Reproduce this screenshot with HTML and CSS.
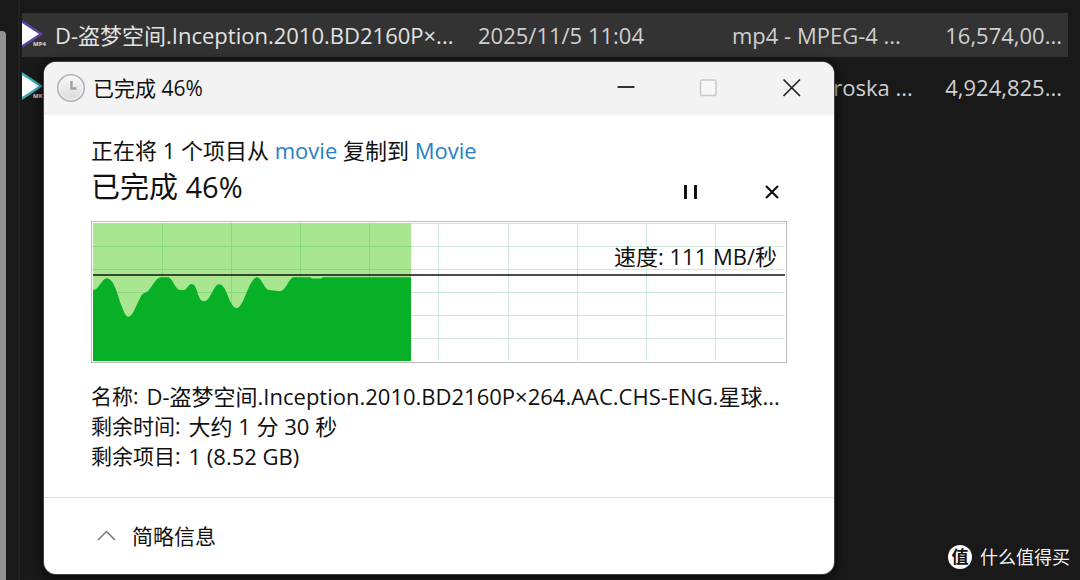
FILE: index.html
```html
<!DOCTYPE html>
<html lang="zh-CN">
<head>
<meta charset="utf-8">
<title>已完成 46%</title>
<link rel="stylesheet" href="styles.css">
</head>
<body>
<main class="desktop">
  <section class="explorer">
    <div class="scrollbar"></div>
    <div class="divider"></div>
    <table class="files">
      <colgroup><col class="col-icon"><col class="col-name"><col class="col-date"><col class="col-type"><col class="col-size"></colgroup>
      <tbody>
        <tr class="file selected">
          <td class="file-icon"><svg width="28" height="44" viewBox="0 0 28 44" aria-hidden="true"><path d="M0 7 21 21 0 35z" fill="#5a45a8"/><path d="M0 10 17 21 0 32z" fill="#fff"/><text x="11" y="33" class="badge">MP4</text></svg></td>
          <td>D-盗梦空间.Inception.2010.BD2160P×...</td>
          <td class="meta">2025/11/5 11:04</td>
          <td class="meta">mp4 - MPEG-4 ...</td>
          <td class="meta size">16,574,00...</td>
        </tr>
        <tr class="file">
          <td class="file-icon"><svg width="28" height="44" viewBox="0 0 28 44" aria-hidden="true"><path d="M0 7 21 21 0 35z" fill="#35aeb8"/><path d="M0 10 17 21 0 32z" fill="#fff"/><text x="11" y="33" class="badge">MKV</text></svg></td>
          <td></td>
          <td></td>
          <td class="meta">mkv - Matroska ...</td>
          <td class="meta size">4,924,825...</td>
        </tr>
      </tbody>
    </table>
  </section>

  <section class="dialog" role="dialog" aria-labelledby="dialog-title">
    <header class="titlebar">
      <svg class="clock" width="30" height="30" viewBox="0 0 30 30" aria-hidden="true">
        <defs><linearGradient id="face" x1="0" y1="0" x2="0" y2="1"><stop offset="0" stop-color="#fafafa"/><stop offset="1" stop-color="#d9d9d9"/></linearGradient></defs>
        <circle cx="15" cy="15" r="13.3" fill="url(#face)" stroke="#b3b3b3" stroke-width="1.6"/>
        <circle cx="15" cy="15" r="11.7" fill="none" stroke="#f8f8f8" stroke-width="1"/>
        <path d="M15.500 8v7.500h5" fill="none" stroke="#a0a0a0" stroke-width="2.4"/>
      </svg>
      <h1 class="title" id="dialog-title">已完成 46%</h1>
      <div class="window-buttons">
        <button class="icon-button" aria-label="最小化"><svg width="20" height="20" viewBox="0 0 20 20"><path d="M1.500 9h17" stroke="#333" stroke-width="2"/></svg></button>
        <button class="icon-button" aria-label="最大化" disabled><svg width="20" height="20" viewBox="0 0 20 20"><rect x="1.500" y="2" width="15.500" height="15.500" rx="1.500" fill="#f7f7f7" stroke="#c8c8c8" stroke-width="1.500"/></svg></button>
        <button class="icon-button" aria-label="关闭"><svg width="20" height="20" viewBox="0 0 20 20"><path d="m1.500 1.500 16.500 16.500M18 1.500l-16.500 16.500" stroke="#222" stroke-width="1.700"/></svg></button>
      </div>
    </header>

    <div class="body">
      <p class="summary">正在将 1 个项目从 <a href="#source">movie</a> 复制到 <a href="#target">Movie</a></p>
      <div class="status">
        <h2 class="progress-title">已完成 46%</h2>
        <div class="actions">
          <button class="icon-button" aria-label="暂停"><svg width="20" height="20" viewBox="0 0 20 20"><path d="M4.500 3v14M14.500 3v14" stroke="#000" stroke-width="2.800"/></svg></button>
          <button class="icon-button" aria-label="取消"><svg width="20" height="20" viewBox="0 0 20 20"><path d="m4 4 12 12M16 4 4 16" stroke="#111" stroke-width="2.200"/></svg></button>
        </div>
      </div>

      <div class="chart">
        <svg class="plot" viewBox="0 0 692 138" preserveAspectRatio="none" aria-hidden="true">
          <path d="M0 .5H692M0 23.500H692M0 46.500H692M0 69.500H692M0 92.500H692M0 115.500H692M69.500 0V138M138.500 0V138M207.500 0V138M276.500 0V138M345.500 0V138M415.500 0V138M484.500 0V138M553.500 0V138M622.500 0V138" stroke="#cfe9d9" fill="none"/>
          <path d="M0 0H318V138H0z" fill="#a8e690"/>
          <path d="M0 23.500H318M0 46.500H318M0 69.500H318M69.500 0V138M138.500 0V138M207.500 0V138M276.500 0V138" stroke="#8ad681" fill="none"/>
          <path d="M0 67C6 67 9 55 14 55.300C20 56 23 66 27 78.700C30 86 32 93.700 35.300 93.700C40 93.700 43 82 48.700 72C50 70 53 70 55.300 67.700C60 63 63 54.300 68 54.300H75C80 55 82 67 87 67H91C94 67 95 61 98.700 61C105 61 104 78.300 111 78.300C118 78.300 120 61.300 126.300 61.300C134 61.300 136 85 143.700 85C151 85 156 54.300 164.300 54.300C168 54.300 172 67 176 67L187 68.300C193 68 196 54.300 201 54.300H217L219 55.500H228L230 54.300H318V138H0z" fill="#08b027"/>
          <path d="M0 52H692" stroke="#111" stroke-width="1.500"/>
        </svg>
        <span class="speed">速度: 111 MB/秒</span>
      </div>

      <dl class="details">
        <div class="detail"><dt>名称:</dt><dd>D-盗梦空间.Inception.2010.BD2160P×264.AAC.CHS-ENG.星球...</dd></div>
        <div class="detail"><dt>剩余时间:</dt><dd>大约 1 分 30 秒</dd></div>
        <div class="detail"><dt>剩余项目:</dt><dd>1 (8.52 GB)</dd></div>
      </dl>
    </div>

    <footer class="footer">
      <button class="toggle"><svg width="20" height="20" viewBox="0 0 20 20" aria-hidden="true"><path d="m2 14 8.500-8.500L19 14" fill="none" stroke="#777" stroke-width="1.500"/></svg>简略信息</button>
    </footer>
  </section>

  <div class="watermark"><span class="watermark-logo">值</span><span>什么值得买</span></div>
</main>
</body>
</html>
```

FILE: styles.css
```css
* { box-sizing: border-box; }

body {
  margin: 0;
  background: #191919;
  color: #111;
  font: 21px/30px "Open Sans", "Noto Sans CJK SC", sans-serif;
}

h1, h2, p, dl, dd { margin: 0; font-weight: 400; }

button {
  padding: 0;
  border: 0;
  background: none;
  color: inherit;
  font: inherit;
}

svg { display: block; }

.desktop {
  position: relative;
  min-height: 100vh;
  overflow: hidden;
}

/* File list behind the dialog */
.explorer {
  display: flex;
  min-height: 100vh;
  padding-right: 12px;
}

.scrollbar {
  width: 6px;
  margin-top: 31px;
  border-top-right-radius: 4px;
  background: #929292;
}

.divider {
  width: 2px;
  margin: 0 2px 0 12px;
  background: #222;
}

.files {
  flex: 1;
  min-width: 0;
  align-self: flex-start;
  margin-top: 13px;
  border-collapse: collapse;
  table-layout: fixed;
  color: #e2e2e2;
  font-size: 22px;
  white-space: nowrap;
}

.col-icon { width: 33px; }
.col-date { width: 254px; }
.col-type { width: 190px; }
.col-size { width: 146px; }

.files td { height: 44px; padding: 0; }
.file + .file td { height: 52px; padding-top: 8px; }
.selected { background: #333; }
.meta { color: #cfcfcf; }
.files .size { padding-right: 6px; text-align: right; }
.badge { fill: #ddd; font: 700 6px "Open Sans", sans-serif; }

/* Copy dialog */
.dialog {
  position: absolute;
  top: 62px;
  left: 44px;
  right: 246px;
  overflow: hidden;
  border-radius: 12px;
  background: #fff;
  box-shadow: 0 0 0 1px #444, 0 2px 12px #000;
}

.titlebar {
  display: flex;
  align-items: center;
  height: 53px;
  padding: 0 32px 2px 12px;
  background: #f3f3f3;
}

.title { margin-left: 7px; font-size: 21px; }

.window-buttons {
  display: flex;
  gap: 63px;
  margin-left: auto;
}

.body { padding: 20px 47px 26px; }

.summary { font-size: 22px; white-space: nowrap; }

a { color: #267fc7; text-decoration: none; }

.status {
  display: flex;
  align-items: center;
  justify-content: space-between;
  height: 44px;
}

.progress-title { font-size: 29px; line-height: 44px; }

.actions {
  display: flex;
  gap: 61px;
  padding: 10px 5px 0 0;
}

.chart {
  position: relative;
  margin-top: 12px;
  padding: 1px;
  border: 1px solid #bcbcbc;
}

.plot { width: 100%; height: 138px; }

.speed {
  position: absolute;
  top: 19px;
  right: 9px;
  font-size: 22px;
}

.details { margin-top: 18px; }
.detail { display: flex; gap: 8px; white-space: nowrap; }
.detail dd { font-size: 22px; }

.footer {
  padding: 23px 52px;
  border-top: 1px solid #dedede;
}

.toggle {
  display: flex;
  align-items: center;
  gap: 16px;
}

.watermark {
  position: absolute;
  right: 10px;
  bottom: 8px;
  display: flex;
  align-items: center;
  gap: 8px;
  color: #f2f2f2;
  font-size: 18px;
}

.watermark-logo {
  width: 24px;
  height: 24px;
  border-radius: 50%;
  background: #fff;
  color: #111;
  font-size: 17px;
  font-weight: 700;
  line-height: 24px;
  text-align: center;
}
```
